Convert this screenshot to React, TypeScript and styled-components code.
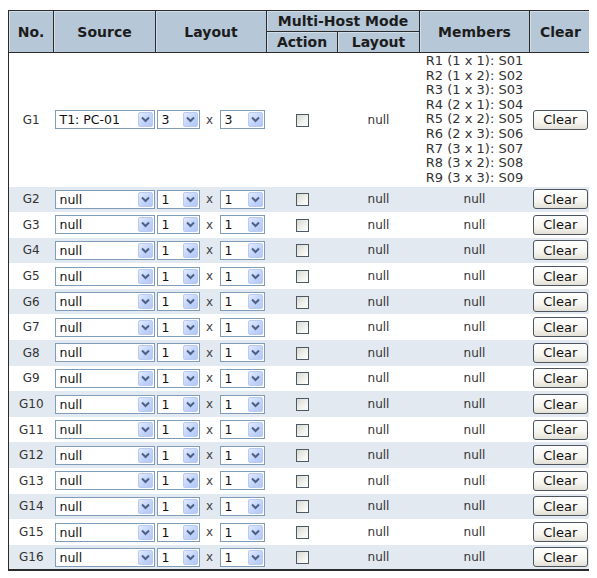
import styled, { createGlobalStyle } from 'styled-components';

type Group = {
  id: string;
  source: string;
  rows: string;
  cols: string;
  members: string[];
};

const GROUPS: Group[] = [
  {
    id: 'G1',
    source: 'T1: PC-01',
    rows: '3',
    cols: '3',
    members: [
      'R1 (1 x 1): S01',
      'R2 (1 x 2): S02',
      'R3 (1 x 3): S03',
      'R4 (2 x 1): S04',
      'R5 (2 x 2): S05',
      'R6 (2 x 3): S06',
      'R7 (3 x 1): S07',
      'R8 (3 x 2): S08',
      'R9 (3 x 3): S09',
    ],
  },
  ...Array.from({ length: 15 }, (_, i) => ({
    id: `G${i + 2}`,
    source: 'null',
    rows: '1',
    cols: '1',
    members: [],
  })),
];

const GlobalStyle = createGlobalStyle`
  body {
    margin: 10px 8px 8px 8px;
    background: #ffffff;
    font-family: "DejaVu Sans", Verdana, sans-serif;
    color: #333;
  }
`;

const ArrowIcon = () => (
  <svg width="9" height="7" viewBox="0 0 9 7">
    <polyline points="1,1.5 4.5,5 8,1.5" fill="none" stroke="#4d6185" strokeWidth="2" />
  </svg>
);

type SelectProps = {
  value: string;
  width: number;
};

const FakeSelect = ({ value, width }: SelectProps) => (
  <SelectBox $width={width}>
    <SelectText>{value}</SelectText>
    <ArrowButton>
      <ArrowIcon />
    </ArrowButton>
  </SelectBox>
);

const App = () => {
  return (
    <>
      <GlobalStyle />
      <Table>
        <colgroup>
          <col style={{ width: 45 }} />
          <col style={{ width: 102 }} />
          <col style={{ width: 111 }} />
          <col style={{ width: 71 }} />
          <col style={{ width: 82 }} />
          <col style={{ width: 110 }} />
          <col style={{ width: 62 }} />
        </colgroup>
        <thead>
          <HeadRow>
            <HeadCell rowSpan={2}>No.</HeadCell>
            <HeadCell rowSpan={2}>Source</HeadCell>
            <HeadCell rowSpan={2}>Layout</HeadCell>
            <HeadCell colSpan={2}>Multi-Host Mode</HeadCell>
            <HeadCell rowSpan={2}>Members</HeadCell>
            <HeadCell rowSpan={2}>Clear</HeadCell>
          </HeadRow>
          <HeadRow>
            <HeadCell>Action</HeadCell>
            <HeadCell>Layout</HeadCell>
          </HeadRow>
        </thead>
        <tbody>
          {GROUPS.map((g, i) => (
            <Row key={g.id} $alt={i % 2 === 1} $tall={g.members.length > 0}>
              <Cell>{g.id}</Cell>
              <FieldCell>
                <FakeSelect value={g.source} width={100} />
              </FieldCell>
              <FieldCell>
                <LayoutPicker>
                  <FakeSelect value={g.rows} width={43} />
                  <Times>x</Times>
                  <FakeSelect value={g.cols} width={45} />
                </LayoutPicker>
              </FieldCell>
              <Cell>
                <CheckBox />
              </Cell>
              <Cell>null</Cell>
              <Cell>
                {g.members.length > 0 ? (
                  <MembersList>
                    {g.members.map((m) => (
                      <div key={m}>{m}</div>
                    ))}
                  </MembersList>
                ) : (
                  'null'
                )}
              </Cell>
              <Cell>
                <ClearButton type="button">Clear</ClearButton>
              </Cell>
            </Row>
          ))}
        </tbody>
      </Table>
    </>
  );
};

const Table = styled.table`
  width: 583px;
  table-layout: fixed;
  border-collapse: collapse;
  border: 1px solid #2b2b2b;
  border-bottom-width: 2px;
`;

const HeadRow = styled.tr`
  height: 21px;
`;

const HeadCell = styled.th`
  background: #b6c7d8;
  border: 1px solid #2b2b2b;
  box-shadow: inset 1px 1px 0 #d3dde8;
  padding: 0;
  font-size: 14px;
  font-weight: bold;
  color: #1c1c1c;
  text-align: center;
  vertical-align: middle;
  line-height: 18px;
`;

const Row = styled.tr<{ $alt: boolean; $tall: boolean }>`
  height: ${({ $tall }) => ($tall ? '134px' : '25.6px')};
  background: ${({ $alt }) => ($alt ? '#e2e9f1' : '#ffffff')};
`;

const Cell = styled.td`
  padding: 0;
  font-size: 12px;
  color: #333;
  text-align: center;
  vertical-align: middle;
`;

const FieldCell = styled.td`
  padding: 0 1px;
  vertical-align: middle;
`;

const LayoutPicker = styled.div`
  display: flex;
  align-items: center;
`;

const Times = styled.span`
  font-size: 12px;
  color: #444;
  width: 20px;
  text-align: center;
`;

const SelectBox = styled.div<{ $width: number }>`
  display: flex;
  align-items: center;
  justify-content: space-between;
  box-sizing: border-box;
  width: ${({ $width }) => $width}px;
  height: 19px;
  border: 1px solid #7f9db9;
  background: #ffffff;
  padding: 1px;
`;

const SelectText = styled.span`
  font-size: 12.5px;
  color: #111;
  padding-left: 3px;
  white-space: nowrap;
`;

const ArrowButton = styled.span`
  display: flex;
  align-items: center;
  justify-content: center;
  box-sizing: border-box;
  width: 15px;
  height: 15px;
  border: 1px solid #b9cbf3;
  border-radius: 2px;
  background: linear-gradient(135deg, #e3ebfd 0%, #c2d4fb 55%, #b3c7f5 100%);
`;

const CheckBox = styled.span`
  display: inline-block;
  box-sizing: border-box;
  width: 13px;
  height: 13px;
  vertical-align: middle;
  border: 1px solid #4c5a66;
  background: linear-gradient(135deg, #d8d8d2 0%, #f2f2ee 60%, #ffffff 100%);
`;

const MembersList = styled.div`
  font-size: 13px;
  line-height: 14.6px;
  color: #333;
`;

const ClearButton = styled.button`
  box-sizing: border-box;
  width: 55px;
  height: 20px;
  padding: 0;
  border: 1px solid #4d5560;
  border-radius: 3px;
  background: linear-gradient(#ffffff 0%, #f6f5f0 60%, #e3e1d6 100%);
  font-family: "DejaVu Sans", Verdana, sans-serif;
  font-size: 13px;
  color: #111;
  cursor: pointer;
`;

export default App;
